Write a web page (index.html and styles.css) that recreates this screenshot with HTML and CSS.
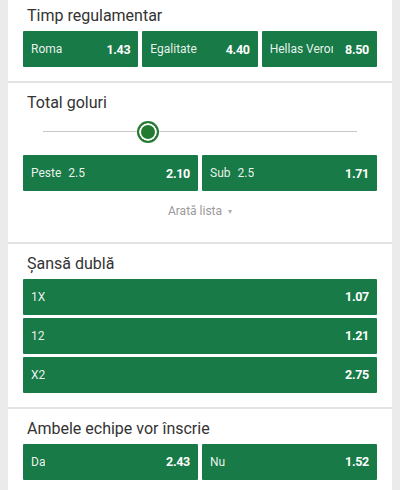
FILE: index.html
```html
<!DOCTYPE html>
<html lang="ro">
<head>
<meta charset="utf-8">
<title>Piețe</title>
<link rel="stylesheet" href="styles.css">
</head>
<body>
<div class="panel">
  <section class="market first">
    <h2 class="title">Timp regulamentar</h2>
    <div class="row three">
      <button class="odd"><span class="label">Roma</span><span class="price">1.43</span></button>
      <button class="odd"><span class="label">Egalitate</span><span class="price">4.40</span></button>
      <button class="odd"><span class="label">Hellas Verona</span><span class="price">8.50</span></button>
    </div>
  </section>

  <section class="market">
    <h2 class="title">Total goluri</h2>
    <div class="slider">
      <div class="track"></div>
      <div class="knob" style="left: 33.4%"></div>
    </div>
    <div class="row two">
      <button class="odd"><span class="label">Peste <span class="line">2.5</span></span><span class="price">2.10</span></button>
      <button class="odd"><span class="label">Sub <span class="line">2.5</span></span><span class="price">1.71</span></button>
    </div>
    <div class="more">Arată lista <span class="caret">▾</span></div>
  </section>

  <section class="market">
    <h2 class="title">Șansă dublă</h2>
    <div class="stack">
      <button class="odd"><span class="label">1X</span><span class="price">1.07</span></button>
      <button class="odd"><span class="label">12</span><span class="price">1.21</span></button>
      <button class="odd"><span class="label">X2</span><span class="price">2.75</span></button>
    </div>
  </section>

  <section class="market">
    <h2 class="title">Ambele echipe vor înscrie</h2>
    <div class="row two">
      <button class="odd"><span class="label">Da</span><span class="price">2.43</span></button>
      <button class="odd"><span class="label">Nu</span><span class="price">1.52</span></button>
    </div>
  </section>
</div>
</body>
</html>
```

FILE: styles.css
```css
html, body {
  margin: 0;
  padding: 0;
  background: #ebebeb;
  font-family: Roboto, "Noto Sans", Arial, sans-serif;
}

.panel {
  margin: 0 8px;
  background: #fff;
  min-height: 490px;
}

.market {
  padding: 8px 15px 14px;
  border-bottom: 2px solid #e3e3e3;
}

.market.first {
  padding-top: 4px;
}

.title {
  margin: 0 0 3px 4px;
  font-size: 16px;
  line-height: 24px;
  font-weight: 400;
  color: #333;
}

.row {
  display: grid;
  gap: 4px;
}

.row.three { grid-template-columns: repeat(3, 1fr); }
.row.two { grid-template-columns: repeat(2, 1fr); }

.stack {
  display: flex;
  flex-direction: column;
  gap: 3.5px;
}

.odd {
  display: flex;
  align-items: center;
  justify-content: space-between;
  gap: 12px;
  height: 36px;
  padding: 0 8px;
  border: 0;
  border-radius: 1px;
  background: #187a46;
  color: #fff;
  font-family: inherit;
  min-width: 0;
  text-align: left;
}

.stack .odd { height: 35.5px; }

.label {
  font-size: 12px;
  color: rgba(255,255,255,0.92);
  white-space: nowrap;
  overflow: hidden;
  min-width: 0;
}

.line {
  margin-left: 4px;
}

.price {
  font-size: 12.5px;
  font-weight: 700;
  letter-spacing: -0.3px;
  flex-shrink: 0;
}

.slider {
  position: relative;
  height: 22px;
  margin: 6px 20px 12px;
}

.track {
  position: relative;
  top: 10px;
  height: 1px;
  background: #c8c8c8;
}

.knob {
  position: absolute;
  top: 0;
  width: 22px;
  height: 22px;
  margin-left: -11px;
  box-sizing: border-box;
  border-radius: 50%;
  border: 2px solid #257a31;
  background: #257a31;
  box-shadow: inset 0 0 0 2px #fff;
}

.more {
  margin-top: 12px;
  padding-bottom: 8px;
  text-align: center;
  font-size: 12px;
  line-height: 16px;
  color: #9a9a9a;
}

.caret {
  font-size: 8px;
  margin-left: 3px;
  vertical-align: 1px;
  color: #b0b0b0;
}
```
